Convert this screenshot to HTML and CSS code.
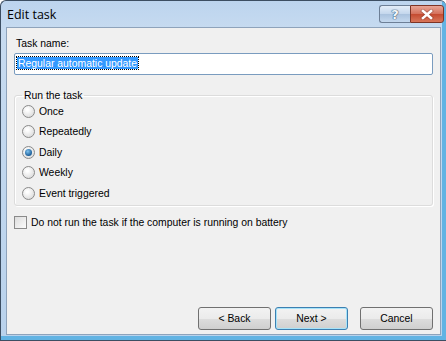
FILE: index.html
```html
<!DOCTYPE html>
<html lang="en">

<head>
    <meta charset="UTF-8">
    <title>Edit task</title>
    <link rel="stylesheet" href="styles.css">
</head>

<body>
    <div class="window">
        <div class="titlebar">
            <span class="title">Edit task</span>
            <div class="caption-buttons">
                <div class="cap-btn help">?</div>
                <div class="cap-btn close">
                    <svg width="14" height="11" viewBox="0 0 14 11">
                        <path d="M3 2 L11 9 M11 2 L3 9" stroke="#5a1a10" stroke-width="4" stroke-linecap="square" opacity="0.35"/>
                        <path d="M3 2 L11 9 M11 2 L3 9" stroke="#fff" stroke-width="2.6" stroke-linecap="square"/>
                    </svg>
                </div>
            </div>
        </div>

        <div class="content">
            <label class="field-label">Task name:</label>
            <div class="textbox"><span class="selected">Regular automatic update</span></div>

            <fieldset class="group">
                <legend>Run the task</legend>
                <div class="radio"><span class="dot"></span>Once</div>
                <div class="radio"><span class="dot"></span>Repeatedly</div>
                <div class="radio"><span class="dot checked"></span>Daily</div>
                <div class="radio"><span class="dot"></span>Weekly</div>
                <div class="radio"><span class="dot"></span>Event triggered</div>
            </fieldset>

            <div class="check"><span class="box"></span>Do not run the task if the computer is running on battery</div>

            <div class="buttons">
                <div class="btn">&lt; Back</div>
                <div class="btn default">Next &gt;</div>
                <div class="btn cancel">Cancel</div>
            </div>
        </div>
    </div>
</body>

</html>
```

FILE: styles.css
```css
* {
    margin: 0;
    padding: 0;
    box-sizing: border-box;
}

body {
    font-family: "Liberation Sans", Arial, sans-serif;
    font-size: 10.4px;
    line-height: 13px;
    color: #000;
    background: #fff;
}

.window {
    width: 446px;
    height: 341px;
    border: 1px solid #3c4e62;
    border-right: none;
    border-radius: 6px 6px 0 0;
    background: linear-gradient(to bottom, #bcd4ee 0, #c7dbf0 30px, #b9d2ec 100%);
    display: flex;
    flex-direction: column;
    padding: 0 5px 5px 5px;
    box-shadow: inset -4px -4px 0 #62b3e3;
}

.titlebar {
    height: 26px;
    display: flex;
    align-items: center;
    justify-content: space-between;
}

.title {
    font-family: "Open Sans", "Liberation Sans", sans-serif;
    font-size: 12.5px;
    padding-left: 1px;
    color: #000;
}

.caption-buttons {
    display: flex;
    align-self: flex-start;
    margin-top: 4px;
    margin-right: -3px;
}

.cap-btn {
    height: 18px;
    border: 1px solid #6d7f96;
    display: flex;
    align-items: center;
    justify-content: center;
}

.help {
    width: 31px;
    border-radius: 3px 0 0 3px;
    background: linear-gradient(to bottom, #e3edf8, #c3d6ec 50%, #aac2de 51%, #c4d8ee);
    color: #f4f8fc;
    font-family: "DejaVu Sans", sans-serif;
    font-weight: bold;
    font-size: 13px;
    text-shadow: 0 0 1px #3b5878, 0 0 1px #3b5878, 0 0 1px #3b5878;
    border-right: none;
}

.close {
    width: 34px;
    border-radius: 0 3px 3px 0;
    border-color: #7d3425;
    background: linear-gradient(to bottom, #e8a596, #d4705a 50%, #c44a30 51%, #d8765a);
}

.content {
    flex: 1;
    background: #f0f0f0;
    border: 1px solid #8ea3bb;
    padding: 9px 7px 4px 7px;
    display: flex;
    flex-direction: column;
}

.field-label {
    display: block;
    margin-left: 2px;
    margin-bottom: 3px;
}

.textbox {
    height: 22px;
    background: #fff;
    border: 1px solid #7a9cbf;
    border-radius: 2px;
    padding: 3px 2px;
    line-height: 14px;
}

.selected {
    background: #3399ff;
    color: #fff;
    outline: 1px dotted #000;
    padding: 1px 1px 0 1px;
}

.group {
    margin-top: 14px;
    border: 1px solid #dcdcdc;
    border-radius: 3px;
    box-shadow: 1px 1px 0 #fff, inset 1px 1px 0 #fff;
    padding: 0 7px 3px 7px;
    height: 117px;
}

.group legend {
    padding: 0 2px;
    margin-left: 0;
}

.radio {
    display: flex;
    align-items: center;
    height: 20.5px;
}

.radio:first-of-type {
    margin-top: -1px;
}

.dot {
    width: 13px;
    height: 13px;
    border-radius: 50%;
    border: 1px solid #8a8a8a;
    background: radial-gradient(circle at 40% 35%, #fff 10%, #dcdcdc 80%);
    margin-right: 4px;
    position: relative;
}

.dot.checked::after {
    content: "";
    position: absolute;
    left: 2px;
    top: 2px;
    width: 7px;
    height: 7px;
    border-radius: 50%;
    background: radial-gradient(circle at 40% 35%, #7ec2ef, #1b5d98 70%);
}

.check {
    display: flex;
    align-items: center;
    margin-top: 10px;
}

.box {
    width: 13px;
    height: 13px;
    border: 1px solid #8a8a8a;
    background: linear-gradient(135deg, #dcdcdc, #fbfbfb);
    margin-right: 4px;
}

.buttons {
    margin-top: auto;
    display: flex;
    justify-content: flex-end;
    gap: 4px;
}

.btn {
    flex: none;
    width: 73px;
    height: 23px;
    border: 1px solid #707070;
    border-radius: 3px;
    background: linear-gradient(to bottom, #f2f2f2, #ebebeb 50%, #dddddd 51%, #cfcfcf);
    display: flex;
    align-items: center;
    justify-content: center;
}

.btn.default {
    border-color: #3c7fb1;
    box-shadow: inset 0 0 0 1px #a6e3f9;
}

.btn.cancel {
    margin-left: 8px;
}
```
